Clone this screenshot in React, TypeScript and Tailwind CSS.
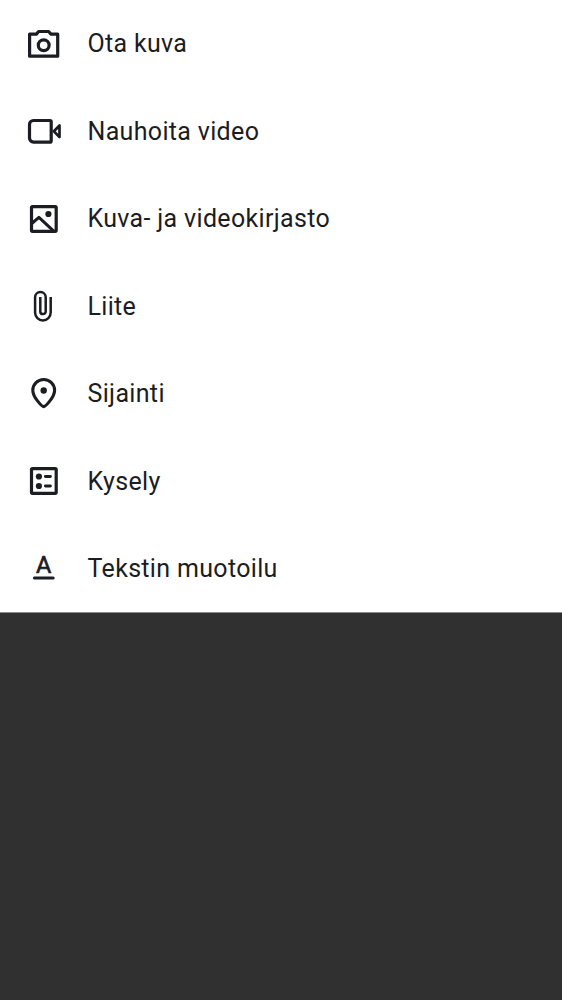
import type { ReactNode } from "react";

type Item = { label: string; icon: ReactNode; viewBox: string };

const items: Item[] = [
  {
    label: "Ota kuva",
    viewBox: "0 -1 50 50",
    icon: (
      <>
        <path d="M9.6 14.1H16.4L18.6 11.5H28.6L31 14.1H37.7V36.2H9.6Z" />
        <circle cx="23.7" cy="25.2" r="5.4" />
      </>
    ),
  },
  {
    label: "Nauhoita video",
    viewBox: "0 0 50 50",
    icon: (
      <>
        <path d="M13.5 14.5H30A1.2 1.2 0 0 1 31.2 15.7V34.9A1.2 1.2 0 0 1 30 36.1H13.5A4 4 0 0 1 9.5 32.1V18.5A4 4 0 0 1 13.5 14.5Z" />
        <path d="M33.9 25.3L39.5 19.5V31.1Z" strokeWidth="2.7" />
      </>
    ),
  },
  {
    label: "Kuva- ja videokirjasto",
    viewBox: "0 0 50 50",
    icon: (
      <>
        <rect x="11.5" y="12.6" width="24.7" height="24.7" rx="1" />
        <path d="M11.8 29.5L18.9 23.4L34 37.3" strokeWidth="3" />
        <circle cx="28.4" cy="20" r="3.1" fill="currentColor" stroke="none" />
      </>
    ),
  },
  {
    label: "Liite",
    viewBox: "0 -1 50 50",
    icon: (
      <path
        d="M30.7 15V30.6A7.8 7.8 0 0 1 15.1 30.6V15.3A5.3 5.3 0 0 1 25.7 15.3V29.4A2.7 2.7 0 0 1 20.3 29.4V15"
        strokeWidth="2.5"
        strokeLinecap="butt"
      />
    ),
  },
  {
    label: "Sijainti",
    viewBox: "0 0 50 50",
    icon: (
      <>
        <path d="M23.7 37.6C22.2 37.6 12.8 28.5 12.8 21.2A10.9 10.7 0 0 1 34.6 21.2C34.6 28.5 25.2 37.6 23.7 37.6Z" strokeWidth="3.1" />
        <circle cx="23.7" cy="21.5" r="3.2" fill="currentColor" stroke="none" />
      </>
    ),
  },
  {
    label: "Kysely",
    viewBox: "0 0 50 50",
    icon: (
      <>
        <rect x="11.5" y="12.6" width="24.7" height="24.7" rx="1" />
        <circle cx="18.9" cy="20.5" r="3.1" fill="currentColor" stroke="none" />
        <circle cx="18.9" cy="30" r="3.1" fill="currentColor" stroke="none" />
        <path d="M25.4 20.5H30.4M25.4 30H30.4" strokeWidth="2.9" />
      </>
    ),
  },
  {
    label: "Tekstin muotoilu",
    viewBox: "0 0 50 50",
    icon: (
      <>
        <text
          x="23.7"
          y="28.9"
          textAnchor="middle"
          fill="currentColor"
          strokeWidth="0.7"
          className="font-['Roboto',sans-serif] text-[23.5px] font-normal"
        >
          A
        </text>
        <path d="M14.4 34.1H33.2" strokeWidth="3" />
      </>
    ),
  },
];

export default function App() {
  return (
    <div className="flex min-h-screen w-full flex-col bg-[#303030] font-['Roboto',sans-serif] text-[#1b1d22]">
      <ul className="h-[613px] w-full border-b border-[#8b8b8b] bg-white">
        {items.map((item) => (
          <li key={item.label} className="flex h-[87.5px] items-center pl-5">
            <svg
              width="50"
              height="50"
              viewBox={item.viewBox}
              fill="none"
              stroke="currentColor"
              strokeWidth="3.2"
              strokeLinecap="round"
              strokeLinejoin="round"
              aria-hidden="true"
              className="shrink-0"
            >
              {item.icon}
            </svg>
            <span className="pl-[17.5px] text-[25px] leading-[37.5px] tracking-[0.33px]">{item.label}</span>
          </li>
        ))}
      </ul>
    </div>
  );
}
